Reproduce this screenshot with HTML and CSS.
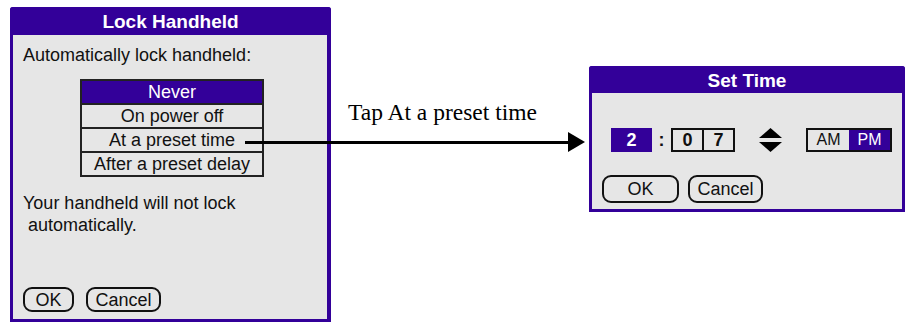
FILE: index.html
```html
<!DOCTYPE html>
<html lang="en">
<head>
<meta charset="UTF-8">
<meta name="viewport" content="width=device-width, initial-scale=1.0">
<title>Lock Handheld</title>
<link rel="stylesheet" href="styles.css">
</head>

<body>

<div class="scene">

    <!-- Security pref: lock dialog -->
    <div class="dialog lock-dialog">
        <div class="dialog-title">Lock Handheld</div>
        <div class="dialog-body">
            <p class="label">Automatically lock handheld:</p>
            <ul class="pick-list">
                <li class="selected">Never</li>
                <li>On power off</li>
                <li>At a preset time</li>
                <li>After a preset delay</li>
            </ul>
            <p class="note">Your handheld will not lock
 automatically.</p>
            <div class="buttons">
                <button class="btn btn-ok">OK</button>
                <button class="btn">Cancel</button>
            </div>
        </div>
    </div>

    <div class="callout">
        <p class="caption">Tap At a preset time</p>
    </div>

    <!-- Set Time dialog -->
    <div class="dialog time-dialog">
        <div class="dialog-title">Set Time</div>
        <div class="dialog-body">
            <div class="time-row">
                <span class="hour">2</span>
                <span class="colon">:</span>
                <span class="minutes">
                    <span class="digit">0</span>
                    <span class="digit">7</span>
                </span>
                <svg class="spinner" width="23" height="25" viewBox="0 0 23 25">
                    <polygon points="11.5,0 23,10 0,10" fill="#000"/>
                    <polygon points="0,14 23,14 11.5,24" fill="#000"/>
                </svg>
                <span class="ampm">
                    <span class="half">AM</span>
                    <span class="half on">PM</span>
                </span>
            </div>
            <div class="buttons">
                <button class="btn btn-wide">OK</button>
                <button class="btn">Cancel</button>
            </div>
        </div>
    </div>

    <!-- arrow from the list item over to the second dialog -->
    <div class="connector">
        <div class="connector-line"></div>
        <div class="connector-head"></div>
    </div>

</div>

</body>
</html>
```

FILE: styles.css
```css
body {
    margin: 0;
    background-color: #fff;
    font-family: "Liberation Sans", Arial, sans-serif;
    overflow: hidden;
}

p, ul {
    margin: 0;
    padding: 0;
}

.scene {
    position: relative;
    display: flex;
    align-items: flex-start;
    width: 908px;
    height: 322px;
}

/* Palm style dialog frame */
.dialog {
    display: flex;
    flex-direction: column;
    background-color: #e6e6e6;
    border: 3px solid #330099;
    border-top: none;
    border-right-width: 4px;
    border-radius: 3px 3px 0 0;
    box-sizing: border-box;
}

.dialog-title {
    background-color: #330099;
    color: #fff;
    font-weight: bold;
    font-size: 19px;
    text-align: center;
    margin: 0 -4px 0 -3px;
    border-radius: 3px 3px 0 0;
}

.dialog-body {
    flex: 1;
    display: flex;
    flex-direction: column;
    font-size: 18px;
    color: #111;
}

.lock-dialog {
    width: 321px;
    height: 315px;
    margin: 7px 0 0 10px;
}

.lock-dialog .dialog-title {
    height: 28px;
    line-height: 29px;
}

.lock-dialog .dialog-body {
    padding: 9px 0 7px 10px;
}

.label {
    line-height: 22px;
}

.pick-list {
    list-style: none;
    width: 184px;
    margin: 13px 0 0 57px;
    border: 2px solid #222;
    box-sizing: border-box;
}

.pick-list li {
    height: 22px;
    line-height: 22px;
    text-align: center;
    border-top: 2px solid #222;
}

.pick-list li:first-child {
    border-top: none;
}

.pick-list li.selected {
    background-color: #330099;
    color: #fff;
}

.note {
    margin-top: 15px;
    line-height: 22px;
    white-space: pre-wrap;
}

.buttons {
    display: flex;
    gap: 12px;
    margin-top: auto;
}

.btn {
    font-family: inherit;
    font-size: 18px;
    color: #111;
    background-color: #e6e6e6;
    border: 2px solid #111;
    border-radius: 9px;
    height: 25px;
    padding: 0;
    width: 75px;
    line-height: 20px;
}

.btn-ok {
    width: 51px;
}

/* caption between the two dialogs */
.callout {
    width: 258px;
}

.caption {
    font-family: "Liberation Serif", "Times New Roman", serif;
    font-size: 23.5px;
    color: #000;
    margin: 98px 0 0 17px;
    line-height: 28px;
}

.time-dialog {
    width: 316px;
    height: 146px;
    margin-top: 66px;
    border-right-width: 3px;
}

.time-dialog .dialog-title {
    height: 27px;
    line-height: 29px;
    margin-right: -3px;
}

.time-dialog .dialog-body {
    padding: 35px 0 6px 10px;
}

.time-row {
    display: flex;
    align-items: center;
    height: 24px;
    margin-left: 9px;
}

.hour {
    width: 41px;
    height: 24px;
    line-height: 24px;
    text-align: center;
    background-color: #330099;
    color: #fff;
    font-weight: bold;
}

.colon {
    width: 19px;
    text-align: center;
    font-weight: bold;
}

.minutes {
    display: flex;
    height: 24px;
    border: 2px solid #111;
    box-sizing: border-box;
}

.digit {
    width: 29px;
    line-height: 20px;
    text-align: center;
    font-weight: bold;
}

.digit + .digit {
    border-left: 2px solid #111;
}

.spinner {
    margin-left: 24px;
}

.ampm {
    display: flex;
    margin-left: 24px;
    height: 24px;
    border: 2px solid #111;
    box-sizing: border-box;
    font-size: 16px;
}

.half {
    width: 41px;
    line-height: 20px;
    text-align: center;
}

.half.on {
    background-color: #330099;
    color: #fff;
}

.time-dialog .buttons {
    gap: 9px;
}

.btn-wide {
    width: 77px;
}

.time-dialog .btn {
    height: 28px;
}

.connector {
    position: absolute;
    left: 245px;
    top: 132px;
    width: 340px;
    height: 20px;
    display: flex;
    align-items: center;
}

.connector-line {
    flex: 1;
    height: 3px;
    background-color: #000;
}

.connector-head {
    width: 0;
    height: 0;
    border-left: 17px solid #000;
    border-top: 10px solid transparent;
    border-bottom: 10px solid transparent;
}
```
